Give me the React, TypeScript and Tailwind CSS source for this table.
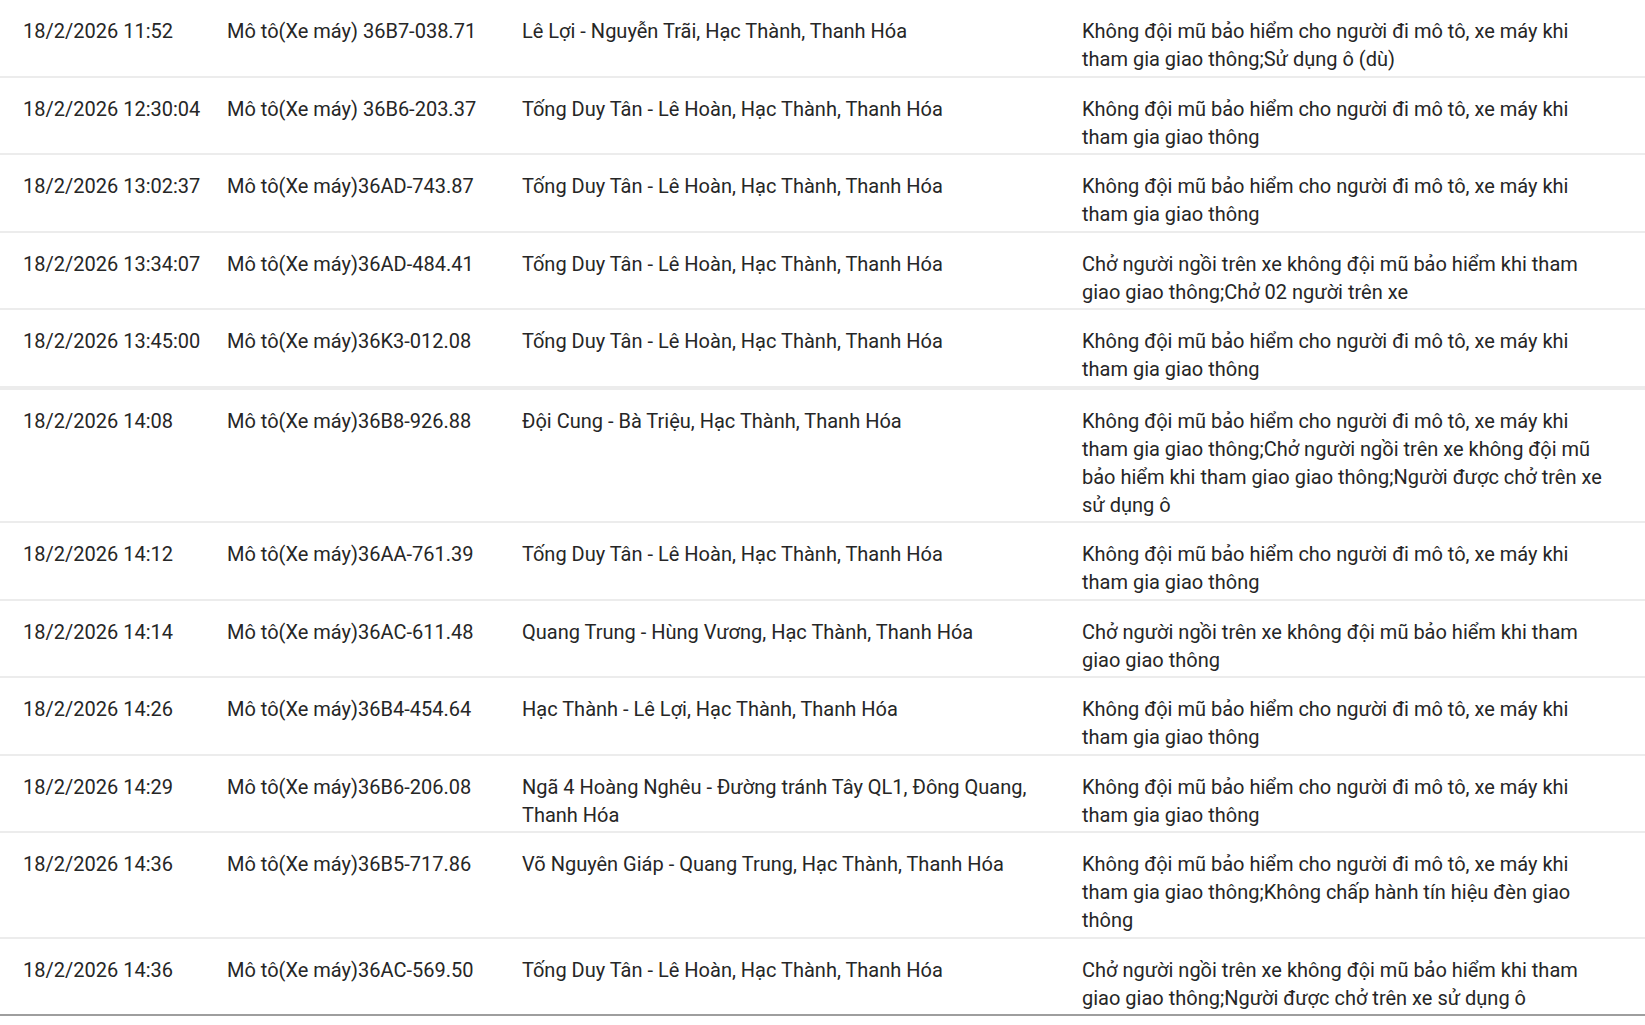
import React from 'react';

const rows = [
  {
    time: "18/2/2026 11:52",
    plate: "Mô tô(Xe máy) 36B7-038.71",
    place: "Lê Lợi - Nguyễn Trãi, Hạc Thành, Thanh Hóa",
    violation: "Không đội mũ bảo hiểm cho người đi mô tô, xe máy khi tham gia giao thông;Sử dụng ô (dù)"
  },
  {
    time: "18/2/2026 12:30:04",
    plate: "Mô tô(Xe máy) 36B6-203.37",
    place: "Tống Duy Tân - Lê Hoàn, Hạc Thành, Thanh Hóa",
    violation: "Không đội mũ bảo hiểm cho người đi mô tô, xe máy khi tham gia giao thông"
  },
  {
    time: "18/2/2026 13:02:37",
    plate: "Mô tô(Xe máy)36AD-743.87",
    place: "Tống Duy Tân - Lê Hoàn, Hạc Thành, Thanh Hóa",
    violation: "Không đội mũ bảo hiểm cho người đi mô tô, xe máy khi tham gia giao thông"
  },
  {
    time: "18/2/2026 13:34:07",
    plate: "Mô tô(Xe máy)36AD-484.41",
    place: "Tống Duy Tân - Lê Hoàn, Hạc Thành, Thanh Hóa",
    violation: "Chở người ngồi trên xe không đội mũ bảo hiểm khi tham giao giao thông;Chở 02 người trên xe"
  },
  {
    time: "18/2/2026 13:45:00",
    plate: "Mô tô(Xe máy)36K3-012.08",
    place: "Tống Duy Tân - Lê Hoàn, Hạc Thành, Thanh Hóa",
    violation: "Không đội mũ bảo hiểm cho người đi mô tô, xe máy khi tham gia giao thông"
  },
  {
    time: "18/2/2026 14:08",
    plate: "Mô tô(Xe máy)36B8-926.88",
    place: "Đội Cung - Bà Triệu, Hạc Thành, Thanh Hóa",
    violation: "Không đội mũ bảo hiểm cho người đi mô tô, xe máy khi tham gia giao thông;Chở người ngồi trên xe không đội mũ bảo hiểm khi tham giao giao thông;Người được chở trên xe sử dụng ô"
  },
  {
    time: "18/2/2026 14:12",
    plate: "Mô tô(Xe máy)36AA-761.39",
    place: "Tống Duy Tân - Lê Hoàn, Hạc Thành, Thanh Hóa",
    violation: "Không đội mũ bảo hiểm cho người đi mô tô, xe máy khi tham gia giao thông"
  },
  {
    time: "18/2/2026 14:14",
    plate: "Mô tô(Xe máy)36AC-611.48",
    place: "Quang Trung - Hùng Vương, Hạc Thành, Thanh Hóa",
    violation: "Chở người ngồi trên xe không đội mũ bảo hiểm khi tham giao giao thông"
  },
  {
    time: "18/2/2026 14:26",
    plate: "Mô tô(Xe máy)36B4-454.64",
    place: "Hạc Thành - Lê Lợi, Hạc Thành, Thanh Hóa",
    violation: "Không đội mũ bảo hiểm cho người đi mô tô, xe máy khi tham gia giao thông"
  },
  {
    time: "18/2/2026 14:29",
    plate: "Mô tô(Xe máy)36B6-206.08",
    place: "Ngã 4 Hoàng Nghêu - Đường tránh Tây QL1, Đông Quang, Thanh Hóa",
    violation: "Không đội mũ bảo hiểm cho người đi mô tô, xe máy khi tham gia giao thông"
  },
  {
    time: "18/2/2026 14:36",
    plate: "Mô tô(Xe máy)36B5-717.86",
    place: "Võ Nguyên Giáp - Quang Trung, Hạc Thành, Thanh Hóa",
    violation: "Không đội mũ bảo hiểm cho người đi mô tô, xe máy khi tham gia giao thông;Không chấp hành tín hiệu đèn giao thông"
  },
  {
    time: "18/2/2026 14:36",
    plate: "Mô tô(Xe máy)36AC-569.50",
    place: "Tống Duy Tân - Lê Hoàn, Hạc Thành, Thanh Hóa",
    violation: "Chở người ngồi trên xe không đội mũ bảo hiểm khi tham giao giao thông;Người được chở trên xe sử dụng ô"
  }
];

export default function App() {
  return (
    <div className="w-[1645px] h-[1025px] overflow-hidden bg-white text-[#262626] font-['Roboto',sans-serif] text-[20px] leading-[28px]">
      {rows.map((r, i) => {
        const last = i === rows.length - 1;
        // the 5th row's divider is a touch heavier in the source
        const border = last
          ? 'border-b-2 border-[#9e9e9e]'
          : i === 4
            ? 'border-b-[4px] border-[#ececec]'
            : 'border-b-2 border-[#ececec]';
        return (
          <div
            key={i}
            className={`grid grid-cols-[204px_295px_560px_1fr] pl-[23px] pt-[17px] pb-[2.5px] ${border}`}
          >
            <div>{r.time}</div>
            <div>{r.plate}</div>
            <div className="pr-[20px]">{r.place}</div>
            <div className="pr-[37px]">{r.violation}</div>
          </div>
        );
      })}
    </div>
  );
}
